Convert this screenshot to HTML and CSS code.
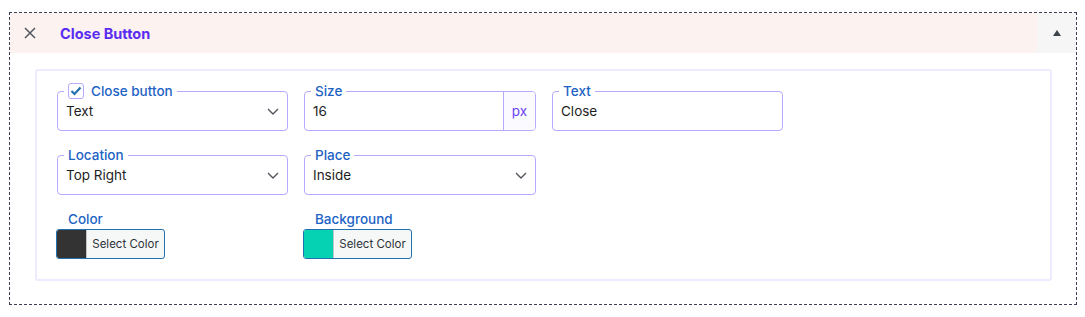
FILE: index.html
```html
<!DOCTYPE html>
<html>
<head>
<meta charset="utf-8">
<link rel="stylesheet" href="styles.css">
</head>
<body>
<div class="panel">
  <div class="panel-head">
    <div class="head-main">
      <span class="x-icon"><svg width="12" height="12" viewBox="0 0 12 12"><path d="M1 1 L11 11 M11 1 L1 11" stroke="#50575e" stroke-width="1.5" fill="none"/></svg></span>
      <span class="title">Close Button</span>
    </div>
    <div class="head-toggle"><svg width="8" height="6" viewBox="0 0 8 6"><path d="M4 0 L8 6 L0 6 Z" fill="#3c434a"/></svg></div>
  </div>
  <div class="panel-body">
    <div class="card">
      <div class="grid">
        <div class="field">
          <span class="flabel"><span class="check"><svg width="12" height="10" viewBox="0 0 12 10"><path d="M1.5 5 L4.5 8 L10.5 1.5" stroke="#2271b1" stroke-width="2.2" fill="none"/></svg></span>Close button</span>
          <span class="value">Text</span>
          <span class="chev"><svg width="12" height="7" viewBox="0 0 12 7"><path d="M1 1 L6 6 L11 1" stroke="#50575e" stroke-width="1.4" fill="none"/></svg></span>
        </div>
        <div class="field addon">
          <span class="flabel">Size</span>
          <span class="value">16</span>
          <span class="unit">px</span>
        </div>
        <div class="field">
          <span class="flabel">Text</span>
          <span class="value">Close</span>
        </div>
      </div>
      <div class="grid row2">
        <div class="field">
          <span class="flabel">Location</span>
          <span class="value">Top Right</span>
          <span class="chev"><svg width="12" height="7" viewBox="0 0 12 7"><path d="M1 1 L6 6 L11 1" stroke="#50575e" stroke-width="1.4" fill="none"/></svg></span>
        </div>
        <div class="field">
          <span class="flabel">Place</span>
          <span class="value">Inside</span>
          <span class="chev"><svg width="12" height="7" viewBox="0 0 12 7"><path d="M1 1 L6 6 L11 1" stroke="#50575e" stroke-width="1.4" fill="none"/></svg></span>
        </div>
      </div>
      <div class="grid row3">
        <div class="color-field">
          <div class="clabel">Color</div>
          <div class="cbtn"><span class="swatch dark"></span><span class="ctext">Select Color</span></div>
        </div>
        <div class="color-field">
          <div class="clabel">Background</div>
          <div class="cbtn"><span class="swatch teal"></span><span class="ctext">Select Color</span></div>
        </div>
      </div>
    </div>
  </div>
</div>
</body>
</html>
```

FILE: styles.css
```css
* { box-sizing: border-box; }
html, body { margin: 0; padding: 0; background: #fff; }
body { font-family: Inter, "Liberation Sans", sans-serif; color: #1e1e1e; }

.panel {
  margin: 12px 0 0 9px;
  width: 1068px;
  height: 293px;
  border: 1px dashed #3f3d56;
}
.panel-head {
  display: flex;
  height: 40px;
}
.head-main {
  flex: 1;
  background: #fcf2f0;
  display: flex;
  align-items: center;
}
.x-icon { display: flex; margin-left: 14px; }
.title {
  margin-left: 24px;
  font-weight: 700;
  font-size: 14.5px;
  color: #5a2cf2;
}
.head-toggle {
  width: 39px;
  background: #f6f6f6;
  display: flex;
  align-items: center;
  justify-content: center;
}
.panel-body { padding: 16px 24px 0 25px; }
.card {
  border: 2px solid #efeafd;
  border-radius: 3px;
  height: 212px;
  padding: 20px 0 0 20px;
}
.grid {
  display: grid;
  grid-template-columns: 231px 232px 231px;
  column-gap: 16px;
}
.row2 { margin-top: 24px; }
.row3 { margin-top: 16px; }

.field {
  position: relative;
  height: 40px;
  border: 1px solid #b6aafc;
  border-radius: 4px;
  display: flex;
  align-items: center;
  padding-left: 8px;
}
.flabel {
  position: absolute;
  top: -9px;
  left: 6px;
  padding: 0 4px;
  background: #fff;
  font-size: 13.5px;
  font-weight: 500;
  line-height: 16px;
  color: #1d63c4;
  display: flex;
  align-items: center;
}
.check {
  width: 16px;
  height: 16px;
  border: 1px solid #b6aafc;
  border-radius: 3px;
  margin-right: 7px;
  display: flex;
  align-items: center;
  justify-content: center;
  background: #fff;
}
.value {
  flex: 1;
  font-size: 13.5px;
  color: #1e1e1e;
  line-height: 20px;
}
.chev { display: flex; margin-right: 8px; }
.addon .unit {
  align-self: stretch;
  width: 32px;
  border-left: 1px solid #b6aafc;
  background: #fbfaff;
  color: #6a3ff2;
  font-size: 13.5px;
  display: flex;
  align-items: center;
  justify-content: center;
  border-radius: 0 3px 3px 0;
}

.color-field { display: flex; flex-direction: column; }
.clabel {
  font-size: 13.5px;
  font-weight: 500;
  line-height: 16px;
  color: #1d63c4;
  padding-left: 11px;
}
.cbtn {
  margin-top: 2px;
  margin-left: -1px;
  width: 109px;
  height: 30px;
  border: 1px solid #2271b1;
  border-radius: 3px;
  display: flex;
  overflow: hidden;
  background: #f6f7f7;
}
.swatch { width: 30px; border-right: 1px solid #c3c4c7; }
.swatch.dark { background: #333333; }
.swatch.teal { background: #05d1b3; }
.ctext {
  flex: 1;
  display: flex;
  align-items: center;
  justify-content: center;
  font-size: 11.5px;
  color: #2c3338;
}
```
